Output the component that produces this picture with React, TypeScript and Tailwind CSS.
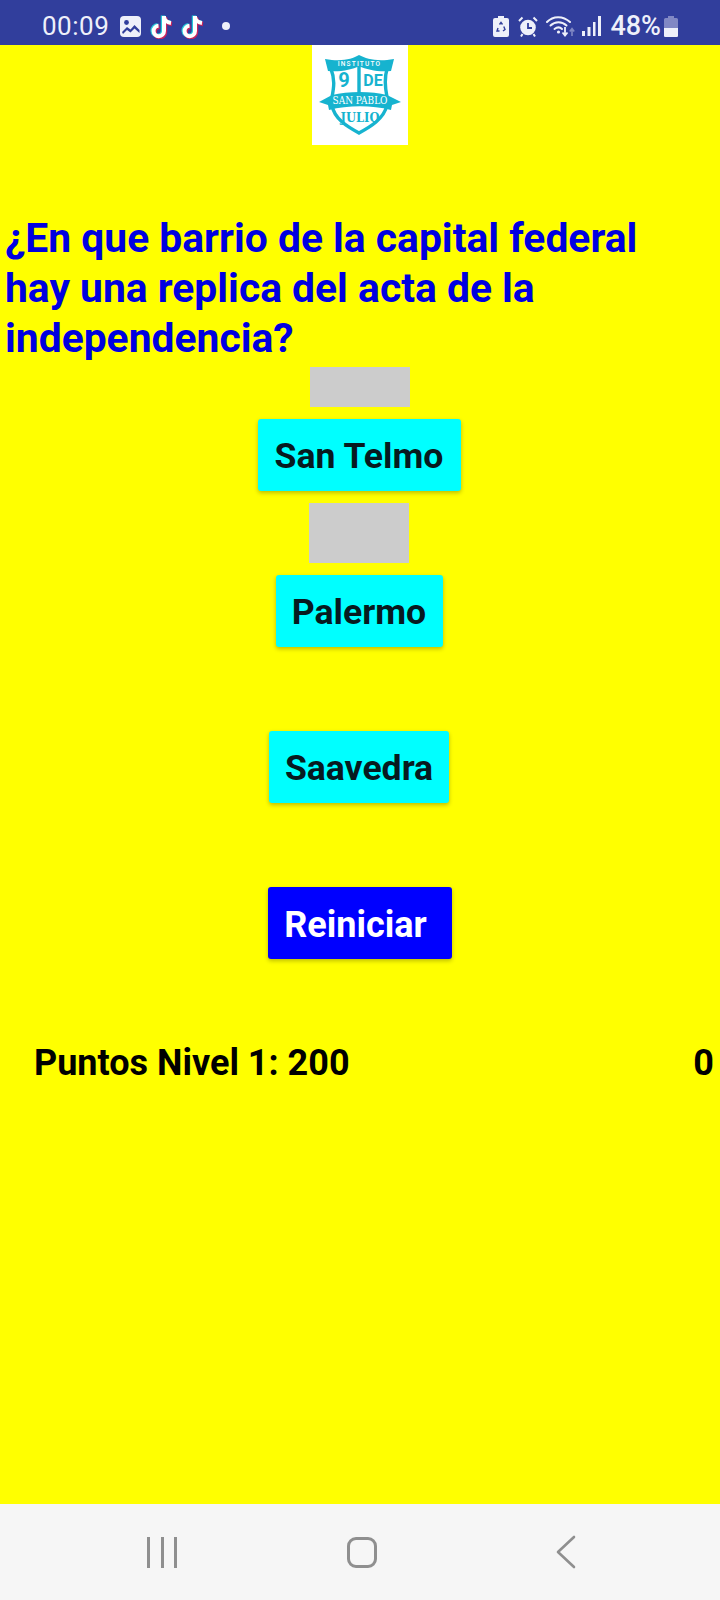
const font = "font-['Roboto',sans-serif]";
const tikTokPath = "M14 3 V18 A5.2 5.2 0 1 1 8.5 12.8 M14 4 C14.6 7.5 17.5 9.5 21 10";

function PhotoIcon() {
  return (
    <svg width="21" height="21" viewBox="0 0 21 21" className="shrink-0">
      <rect x="0" y="0" width="21" height="21" rx="4" fill="#eef0fa" />
      <circle cx="6.5" cy="6.5" r="2.4" fill="#313e9c" />
      <path d="M2 16 L7 11 L10.5 13.5 L14.5 9 L19.5 14 V17 L14.5 12.5 L10.5 16.5 L7 14 L3 18 Z" fill="#313e9c" />
    </svg>
  );
}

function TikTok({ className }: { className: string }) {
  return (
    <svg width="23" height="26" viewBox="0 0 23 26" className={`shrink-0 ${className}`}>
      <path d={tikTokPath} fill="none" stroke="#25c8d8" strokeWidth="4.4" transform="translate(-1 -0.5)" />
      <path d={tikTokPath} fill="none" stroke="#c9245e" strokeWidth="4.4" transform="translate(1 1)" />
      <path d={tikTokPath} fill="none" stroke="#ffffff" strokeWidth="4" />
    </svg>
  );
}

function RecycleBattery() {
  return (
    <svg width="16" height="21" viewBox="0 0 16 21" className="shrink-0">
      <path d="M5 0 H11 V2 H14 Q16 2 16 4 V19 Q16 21 14 21 H2 Q0 21 0 19 V4 Q0 2 2 2 H5 Z" fill="#eef0fa" />
      <path d="M6.5 8.5 L8 6.5 L9.5 8.5 M10.8 10.5 L12 13.5 L10 15 M6.5 15 H4 L5 12" fill="none" stroke="#313e9c" strokeWidth="1.4" />
    </svg>
  );
}

function Alarm() {
  return (
    <svg width="20" height="21" viewBox="0 0 20 21" className="ml-[9px] shrink-0">
      <circle cx="10" cy="11.5" r="7.8" fill="#eef0fa" />
      <path d="M10 7 V12 H14" fill="none" stroke="#313e9c" strokeWidth="1.8" />
      <path d="M1 5 L4.5 1.5 M19 5 L15.5 1.5 M4.5 18 L3 20.5 M15.5 18 L17 20.5" fill="none" stroke="#eef0fa" strokeWidth="2" />
    </svg>
  );
}

function Wifi() {
  return (
    <svg width="29" height="23" viewBox="0 0 29 23" className="ml-[8px] shrink-0">
      <g fill="none" stroke="#eef0fa" strokeWidth="2" strokeLinecap="round">
        <path d="M1 7 C7 0.5 17 0.5 24 7" />
        <path d="M4.5 10.5 C9 6 16 6 20.5 10.5" />
        <path d="M8.5 14 C11 12 14 12 16 14" />
      </g>
      <circle cx="12.5" cy="17" r="1.6" fill="#eef0fa" />
      <path d="M19 12 V20 M16.5 17.5 L19 20.5 L21.5 17.5" fill="none" stroke="#eef0fa" strokeWidth="1.8" />
      <path d="M26 21 V14 M23.8 16.5 L26 13.5 L28.2 16.5" fill="none" stroke="#8188c4" strokeWidth="1.6" />
    </svg>
  );
}

function Signal() {
  return (
    <svg width="19" height="20" viewBox="0 0 19 20" className="ml-[7px] shrink-0">
      <rect x="0" y="15" width="3" height="5" fill="#eef0fa" />
      <rect x="5.5" y="11" width="3" height="9" fill="#eef0fa" />
      <rect x="11" y="6" width="2.5" height="14" fill="#eef0fa" />
      <rect x="16" y="0" width="3" height="20" fill="#eef0fa" />
    </svg>
  );
}

function Battery() {
  return (
    <svg width="14" height="21" viewBox="0 0 14 21" className="ml-[3px] shrink-0">
      <path d="M4 0 H10 V2 H12.5 Q14 2 14 3.5 V19.5 Q14 21 12.5 21 H1.5 Q0 21 0 19.5 V3.5 Q0 2 1.5 2 H4 Z" fill="#8188c4" />
      <path d="M0 12 H14 V19.5 Q14 21 12.5 21 H1.5 Q0 21 0 19.5 Z" fill="#eef0fa" />
    </svg>
  );
}

function Logo() {
  return (
    <svg width="96" height="100" viewBox="0 0 96 100" className="bg-white">
      {/* shield outline */}
      <path d="M19 24 C23 34 22 42 20 52 M75 24 C72 34 73 42 75 52 M47 18 V50" fill="none" stroke="#16b3cf" strokeWidth="3.4" />
      <path d="M20 60 C22 74 36 82 47 88 C58 82 72 74 75 60" fill="none" stroke="#16b3cf" strokeWidth="3.4" />
      {/* top band */}
      <path d="M13 14 C30 17 40 14 47 10 C55 14 65 17 82 14 L79 26 C66 27 55 25 47 21 C40 25 28 27 16 26 Z" fill="#16b3cf" />
      <text x="47.5" y="20.5" textAnchor="middle" fontSize="6.5" fontWeight="500" fill="#fff" fontFamily="Roboto, sans-serif" letterSpacing="1.2">INSTITUTO</text>
      <text x="32" y="42" textAnchor="middle" fontSize="20" fontWeight="700" fill="#16b3cf" fontFamily="Roboto, sans-serif">9</text>
      <text x="61" y="41" textAnchor="middle" fontSize="16" fontWeight="700" fill="#16b3cf" fontFamily="Roboto, sans-serif">DE</text>
      {/* ribbon */}
      <path d="M7 57 L20 50 C36 46 60 46 75 50 L89 57 L80 60 L79 65 C60 60 36 60 17 65 L16 60 Z" fill="#16b3cf" />
      <text x="48" y="59" textAnchor="middle" fontSize="10.5" fill="#fff" fontFamily="'DejaVu Serif', serif" textLength="55" lengthAdjust="spacingAndGlyphs">SAN PABLO</text>
      <text x="48" y="77" textAnchor="middle" fontSize="13.5" fontWeight="700" fill="#16b3cf" fontFamily="'DejaVu Serif', serif" textLength="39" lengthAdjust="spacingAndGlyphs">JULIO</text>
    </svg>
  );
}

function AnswerButton({ label, className }: { label: string; className: string }) {
  return (
    <button
      className={`mr-[2px] h-[72px] rounded-[3px] bg-[#00ffff] pt-[4px] text-[35.6px] font-bold leading-none text-[#071a20] shadow-[0_2px_4px_rgba(0,0,0,0.25)] ${className}`}
    >
      {label}
    </button>
  );
}

export default function App() {
  return (
    <div className={`flex h-[1600px] w-[720px] flex-col overflow-hidden bg-[#ffff00] ${font}`}>
      {/* Status bar */}
      <div className="flex h-[45px] shrink-0 items-center bg-[#313e9c] pl-[42px] pr-[42px] pt-[7px] text-[#eef0fa]">
        <span className="w-[66px] text-[26px] leading-none tracking-[0.5px]">00:09</span>
        <div className="ml-[12px] flex items-center">
          <PhotoIcon />
          <TikTok className="ml-[9px]" />
          <TikTok className="ml-[8px]" />
        </div>
        <span className="ml-[18px] h-[8px] w-[8px] rounded-full bg-[#eef0fa]" />
        <div className="ml-auto flex items-center">
          <RecycleBattery />
          <Alarm />
          <Wifi />
          <Signal />
          <span className="ml-[9px] text-[27px] font-medium leading-none">48%</span>
          <Battery />
        </div>
      </div>

      {/* Logo */}
      <div className="flex shrink-0 justify-center">
        <Logo />
      </div>

      {/* Question */}
      <h1 className="mt-[68px] pl-[5px] pr-[60px] text-[40.8px] font-bold leading-[50px] text-[#0000e0]">
        ¿En que barrio de la capital federal hay una replica del acta de la independencia?
      </h1>

      {/* Answers */}
      <div className="flex flex-col items-center">
        <div className="mt-[4px] h-[40px] w-[100px] bg-[#cccccc]" />
        <AnswerButton label="San Telmo" className="mt-[12px] w-[203px]" />
        <div className="mr-[2px] mt-[12px] h-[60px] w-[100px] bg-[#cccccc]" />
        <AnswerButton label="Palermo" className="mt-[12px] w-[167px]" />
        <AnswerButton label="Saavedra" className="mt-[84px] w-[180px]" />
        <button className="mt-[84px] h-[72px] w-[184px] rounded-[3px] bg-[#0000ff] pr-[9px] pt-[4px] text-[36px] font-bold leading-none text-white shadow-[0_2px_4px_rgba(0,0,0,0.25)]">
          Reiniciar
        </button>
      </div>

      {/* Score */}
      <div className="mt-[84px] flex justify-between pl-[34px] pr-[6px] text-[36px] font-bold leading-[40px] text-black">
        <span>Puntos Nivel 1: 200</span>
        <span>0</span>
      </div>

      {/* Nav bar */}
      <div className="mt-auto flex h-[96px] shrink-0 items-center bg-[#f6f6f6]">
        <div className="ml-[147px] flex gap-[10.5px]">
          <span className="h-[31px] w-[3px] bg-[#8f8f8f]" />
          <span className="h-[31px] w-[3px] bg-[#8f8f8f]" />
          <span className="h-[31px] w-[3px] bg-[#8f8f8f]" />
        </div>
        <span className="ml-[170px] h-[31px] w-[30px] rounded-[9px] border-[3px] border-[#8f8f8f]" />
        <svg width="20" height="34" viewBox="0 0 20 34" className="ml-[179px]">
          <path d="M18 2 L2 17 L18 32" fill="none" stroke="#8f8f8f" strokeWidth="2.6" strokeLinecap="round" strokeLinejoin="round" />
        </svg>
      </div>
    </div>
  );
}
